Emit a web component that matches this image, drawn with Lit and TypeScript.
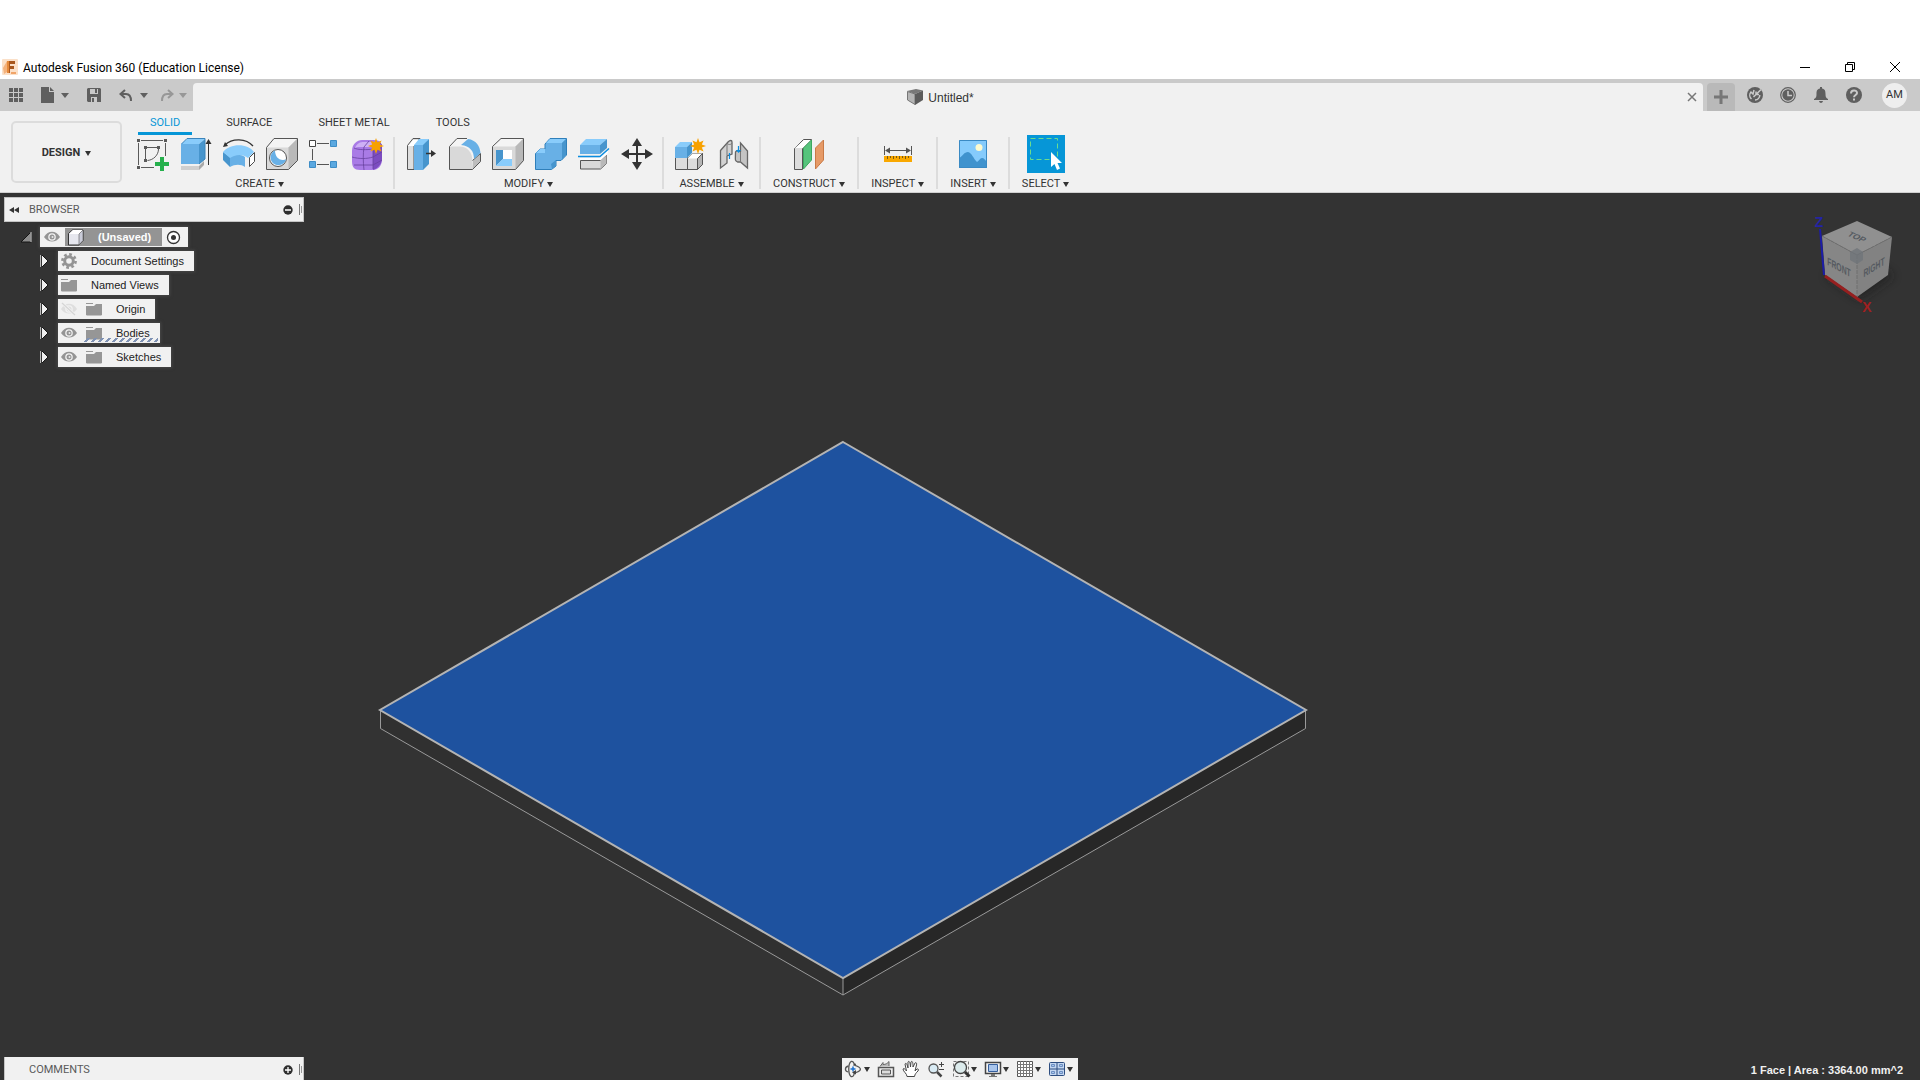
import { LitElement, html, css, svg } from "lit";
import { customElement } from "lit/decorators.js";

type Icon = { w: number; h: number; body: unknown };
const icon = (i: Icon) => html`<svg width=${i.w} height=${i.h} viewBox="0 0 ${i.w} ${i.h}" aria-hidden="true">${i.body}</svg>`;
const mk = (w: number, h: number, body: unknown): Icon => ({ w, h, body });

const star = svg`<path fill="#f7a100" d="M0-8 1.500-3.700 5.600-5.600 3.800-1.500 8 0 3.800 1.500 5.600 5.600 1.500 3.700 0 8-1.500 3.700-5.600 5.600-3.800 1.500-8 0-3.800-1.500-5.600-5.600-1.500-3.700Z"/>`;

const I = {
  logo: mk(16, 16, svg`<rect width="16" height="16" rx="1" fill="#fbe0c8"/><path d="M1 9 5 2v11l-3 2Z" fill="#f4b27c"/><path d="M5 2h8v3H8v2h4v3H8v4H5Z" fill="#a8561c"/><path d="M5 2h2v12H5Z" fill="#e58a3c"/><path d="M9 13h5v2H9Z" fill="#f0a468"/>`),
  grid: mk(14, 14, svg`<path fill="#5f5f5f" d="M0 0h4v4H0zM5 0h4v4H5zM10 0h4v4h-4zM0 5h4v4H0zM5 5h4v4H5zM10 5h4v4h-4zM0 10h4v4H0zM5 10h4v4H5zM10 10h4v4h-4z"/>`),
  file: mk(13, 16, svg`<path fill="#5f5f5f" d="M0 0h8v5h5v11H0zM9 0l4 4H9z"/>`),
  save: mk(14, 14, svg`<path fill="#5f5f5f" fill-rule="evenodd" d="M1 0h12l1 1v13H1l-1-1V1zM3 1v5h8V1zM4 9v5h6V9z"/><path d="M8 1h2v4H8zM5 10h2v4H5z" fill="#5f5f5f"/>`),
  undo: mk(14, 13, svg`<path d="M6 1 1.500 5 6 9M2 5h5c3 0 5 2 5 7" fill="none" stroke="#5f5f5f" stroke-width="2"/>`),
  redo: mk(14, 13, svg`<path d="M8 1l4.500 4L8 9M12 5H7c-3 0-5 2-5 7" fill="none" stroke="#979797" stroke-width="2"/>`),
  min: mk(10, 10, svg`<path d="M0 5.500h10" stroke="#000"/>`),
  restore: mk(10, 10, svg`<path d="M.5 2.500h7v7h-7zM2.500 2V.5h7v7H8" fill="none" stroke="#000"/>`),
  close: mk(10, 10, svg`<path d="M0 0l10 10M10 0 0 10" stroke="#000"/>`),
  tabClose: mk(10, 10, svg`<path d="M1 1l8 8M9 1 1 9" stroke="#777" stroke-width="1.500"/>`),
  plus: mk(14, 14, svg`<path d="M7 0v14M0 7h14" stroke="#777" stroke-width="3"/>`),
  cube: mk(16, 16, svg`<path d="M0 2 9 0l7 1.500L8 5z" fill="#777"/><path d="M.5 2.500 8 5v10.500L.5 11z" fill="#b5b5b5" stroke="#777"/><path d="M8 5l8-3.500V11l-8 5z" fill="#5b5b5b"/>`),
  sync: mk(16, 16, svg`<circle cx="8" cy="8" r="8" fill="#5f5f5f"/><path d="M4.500 12A5 5 0 0 1 4 5l2 2 1-4M12.800 8A5 5 0 0 1 8 13M6.500 10 9 7.500M9 4.500v3h3M9 7.500l5-5" fill="none" stroke="#cacaca" stroke-width="1.500"/>`),
  clock: mk(16, 16, svg`<circle cx="8" cy="8" r="7.300" fill="none" stroke="#5f5f5f" stroke-width="1.200"/><circle cx="8" cy="8" r="5.700" fill="#5f5f5f"/><path d="M8 4v4.500h4" fill="none" stroke="#cacaca" stroke-width="1.500"/>`),
  bell: mk(14, 16, svg`<path fill="#5f5f5f" d="M6 0h2v1.500c3 .5 3.500 2.500 3.500 5.500 0 3 .5 4 2.500 5v1H0v-1c2-1 2.500-2 2.500-5C2.500 4 3 2 6 1.500zM5 14h4c-.5 2.500-3.500 2.500-4 0z"/>`),
  help: mk(16, 16, svg`<circle cx="8" cy="8" r="8" fill="#5f5f5f"/><path d="M5 6.500C5 2.500 11 2.500 11 6c0 2-3 2-3 4.300M8 11.500v2" fill="none" stroke="#cacaca" stroke-width="2"/>`),
  sketch: mk(32, 32, svg`<g transform="translate(-1 0)"><path d="M5 2.500h22M29.500 5v13M2.500 5v22M5 29.500h13" fill="none" stroke="#5a5a5a" /><path d="M11 9.500h10M9.500 11v10M22.500 11c0 6-5 11-11 11.500" fill="none" stroke="#5a5a5a"/><path fill="#5a5a5a" d="M1 1h3v3H1zM28 1h3v3h-3zM1 28h3v3H1zM8 8h3v3H8zM21 8h3v3h-3zM8 21h3v3H8z"/><path d="M24 19h4v5h5v4h-5v5h-4v-5h-5v-4h5z" fill="#25b04c"/></g>`),
  extrude: mk(32, 32, svg`<path d="M1 28h18l5-5v4l-5 5H1z" fill="#a9a9a9"/><path d="M1 28h18v4H1z" fill="#cfcfcf"/><path d="M1 6h18v20H1z" fill="#68b0e6"/><path d="M1 6l6-5h18l-6 5z" fill="#89ccfb"/><path d="M19 6l6-5v20l-6 5z" fill="#4795cd"/><path d="M1.500 6 7 .5h18V21l-6 5" fill="none" stroke="#3a84bb"/><path d="M28.500 27V5" stroke="#333"/><path d="M28.500 1l3 5h-6z" fill="#333"/>`),
  revolve: mk(32, 32, svg`<path d="M2 7C9 0 23 0 30 8" fill="none" stroke="#333" stroke-width="1.300"/><path d="M0 9l2-5 3 4z" fill="#333"/><path d="M0 14l7 5v10l-7-7z" fill="#4795cd"/><path d="M7 19c5-3 11-3 15 0v10c-4-3-10-3-15 0z" fill="#68b0e6"/><path d="M0 14c7-9 25-9 31 0l-6 6c-5-4-12-4-18 0z" fill="#89ccfb"/><path d="M26.500 19.500l5-5v9l-5 5z" fill="#fff" stroke="#4a4a4a"/>`),
  hole: mk(32, 32, svg`<path d="M.5 9.500 8 .5h23.500v22l-9 9H.5z" fill="#d9d9d9"/><path d="M.5 9.500 8 .5h23.500l-9 9z" fill="#f4f4f4"/><path d="M22.500 9.500l9-9v22l-9 9z" fill="#b9b9b9"/><path d="M.5 9.500 8 .5h23.500v22l-9 9H.5z" fill="none" stroke="#555"/><circle cx="12" cy="20" r="8.500" fill="#fff" stroke="#555"/><path d="M9 12.500c-6 3-6 11 0 14 5 2 10-1 11-5-7 2-11-3-11-9z" fill="#68b0e6"/>`),
  pattern: mk(32, 32, svg`<path d="M8 5.500h12M3.500 11v11M8 26.500h12" stroke="#555"/><path d="M.5 2.500h6v6h-6z" fill="#fff" stroke="#444"/><path d="M21.500 2.500h6v6h-6zM.5 23.500h6v6h-6zM21.500 23.500h6v6h-6z" fill="#5ba8e0" stroke="#3e8dc6"/>`),
  form: mk(32, 32, svg`<path d="M0 13C0 6 5 2 10 2h12c7 0 8 4 8 9v10c0 7-4 11-9 11H8c-6 0-8-3-8-9z" fill="#a97be6"/><path d="M3 10c2-5 5-6 9-6h12c-2 4-4 5-8 5H8c-3 0-4 0-5 1z" fill="#cdb0f5"/><path d="M21 11l9-5v14c0 6-4 10-9 12z" fill="#7c4cc0"/><path d="M0 19c7 2 15 2 21 0l9-5M12 32c-1-9-1-16 0-23l5-6M21 31V11c3-1 6-3 8-6M2 10c4 2 13 2 19 1M2 27h19l9-5" fill="none" stroke="#6841a0" stroke-width=".8"/><g transform="translate(24 8)">${star}</g>`),
  press: mk(32, 32, svg`<path d="M1.500 7.500 7 .5h7l-6 7v24H1.500z" fill="#dedede" stroke="#555"/><path d="M2 8l5-6h7L8 8z" fill="#fff"/><path d="M8 7h9v25H8z" fill="#68b0e6"/><path d="M8 7l5-6h10l-5 6z" fill="#89ccfb"/><path d="M17 7l6-6v25l-6 6z" fill="#4795cd"/><path d="M20 15.500h7" stroke="#333" stroke-width="1.500"/><path d="M25 12l5 3.500-5 3.500z" fill="#333"/>`),
  fillet: mk(32, 32, svg`<path d="M.5 8.500 8 .5h11c7 1 12 7 12 14v9l-8 8H.5z" fill="#f4f4f4"/><path d="M.5 8.500h10c8 0 13 6 13 15v8H.5z" fill="#d9d9d9"/><path d="M24 22l7.500-6v8l-8 7.500z" fill="#bdbdbd"/><path d="M18 .5H8l-7.500 8v23h23l8-8v-8l-8 7" fill="none" stroke="#555"/><path d="M12 7l7-6c8 1 12 7 12.500 14L25 21c0-8-4-13-13-14z" fill="#68b0e6"/>`),
  shell: mk(32, 32, svg`<path d="M.5 8.500 9 .5h22.500v22l-8 9H.5z" fill="#d9d9d9"/><path d="M.5 8.500 9 .5h22.500l-8 8z" fill="#f4f4f4"/><path d="M23.500 8.500l8-8v22l-8 9z" fill="#b9b9b9"/><path d="M.5 8.500 9 .5h22.500v22l-8 9H.5z" fill="none" stroke="#555"/><path d="M4 12h16v16H4z" fill="#fff"/><path d="M4 12h7v9l-7 7z" fill="#4795cd"/><path d="M11 21h9v7H4z" fill="#89ccfb"/>`),
  combine: mk(32, 32, svg`<path d="M.5 15.500 5 11h5V6l5-5.500h16.500V17L26 22.500h-5V28l-4.500 3.500H.5z" fill="#68b0e6" stroke="#2f7fba"/><path d="M11 5l4-4h16l-4 4zM1 15l4-4h5v4z" fill="#89ccfb"/><path d="M27 5l4-4v16l-4 5zM16 26l5-4v6l-4 3z" fill="#4795cd"/>`),
  split: mk(32, 32, svg`<path d="M2 7h20v9H2z" fill="#68b0e6"/><path d="M2 7l6-6h21l-7 6z" fill="#89ccfb"/><path d="M22 7l7-6v9l-7 6z" fill="#4795cd"/><path d="M2.500 22.500h20l6-5v8l-6 5.500h-20z" fill="#d9d9d9" stroke="#555"/><path d="M22.500 22.500l6-5v8l-6 5z" fill="#b9b9b9"/><path d="M2 20h19l9-8v3l-7 7H2z" fill="#fff"/><path d="M0 18.500h22l9-8" fill="none" stroke="#0b8de0" stroke-width="1.500"/>`),
  move: mk(32, 32, svg`<path d="M16 5v22M5 16h22" stroke="#333" stroke-width="2"/><path fill="#333" d="M16 0l5 8H11zM16 32l5-8H11zM0 16l8-5v10zM32 16l-8-5v10z"/>`),
  component: mk(32, 32, svg`<path d="M.5 19.500h12v12H.5zM12.500 20.500l5-5h10v11l-5 5h-10z" fill="#dcdcdc" stroke="#555"/><path d="M12.500 20.500l5-5h10l-5 5z" fill="#fff"/><path d="M22.500 20.500l5-5v11l-5 5z" fill="#b5b5b5" stroke="#555"/><path d="M0 9h12v11H0z" fill="#68b0e6"/><path d="M0 9l5-5h12l-5 5z" fill="#89ccfb"/><path d="M12 9l5-5v11l-5 5z" fill="#4795cd"/><g transform="translate(23 8)">${star}</g>`),
  joint: mk(32, 32, svg`<path d="M2.500 12.500 10 4c2-2 4-2 4 0v12l-5 2v7l-6.500 5z" fill="#d2d2d2" stroke="#666" stroke-width="1.300"/><path d="M9 5v12M14 5c-1 2-4 2-5 0" fill="none" stroke="#777"/><path d="M22.500 5l7 8v17l-7-6h-3c-3-1-2-3-2-10 1-2 4-2 5 0z" fill="#c4c4c4" stroke="#666" stroke-width="1.300"/><path d="M22.500 14v10" stroke="#777"/><path d="M11.500 15v6M20.500 8v6" stroke="#0b8de0" stroke-width="1.200"/><path d="M18 12h5l-2.500 3z" fill="#0b8de0"/>`),
  construct: mk(32, 32, svg`<path d="M1.500 10.500l9-9h8l-9 9v21h-8z" fill="#dcdcdc" stroke="#555"/><path d="M2 10l9-8h7l-8 8z" fill="#fff"/><path d="M10.500 10l8-8v20l-8 9z" fill="#56c47c" stroke="#3ca860"/><path d="M22.500 10l8-8v20l-8 9z" fill="#e69a67" stroke="#c97a46"/>`),
  inspect: mk(32, 32, svg`<path d="M2.500 8v9M29.500 8v9M4 12.500h24" stroke="#555"/><path d="M3 12.500l5-3v6zM29 12.500l-5-3v6z" fill="#555"/><path d="M2 18h28v6H2z" fill="#f9a800"/><path d="M5.500 18v3M8.500 18v2M11.500 18v3M14.500 18v2M17.500 18v3M20.500 18v2M23.500 18v3M26.500 18v2" stroke="#7a5a10"/>`),
  insert: mk(32, 32, svg`<path d="M2 2h28v28H2z" fill="#85cbfc"/><circle cx="22" cy="9.500" r="3.500" fill="#fdfbd0"/><path d="M2 20c4-2 5-6 9-6 4 1 5 6 9 10 2-1 3-4 5-4s3 2 5 4v6H2z" fill="#4093ce"/><path d="M2.500 2.500h27v27h-27z" fill="none" stroke="#3a8ac4"/>`),
  select: mk(38, 38, svg`<path d="M0 0h38v38H0z" fill="#0696d7"/><path d="M3.500 3.500h27v21h-27z" fill="none" stroke="#6ddc8c" stroke-dasharray="5 3"/><path d="M24 17v15l3.500-3 2.500 6 3-1.500-2.500-5.500h4.500z" fill="#fff"/>`),
  rewind: mk(11, 8, svg`<path d="M5 1v6L0 4zM10 1v6L5 4z" fill="#333"/>`),
  minus: mk(10, 10, svg`<circle cx="5" cy="5" r="4.700" fill="#2e2e2e"/><path d="M2 5h6" stroke="#fff" stroke-width="1.500"/>`),
  add: mk(10, 10, svg`<circle cx="5" cy="5" r="4.700" fill="#2e2e2e"/><path d="M2 5h6M5 2v6" stroke="#fff" stroke-width="1.300"/>`),
  grip: mk(4, 11, svg`<path d="M.5 0v11" stroke="#777"/><path d="M2.500 2v7" stroke="#999"/>`),
  open: mk(12, 12, svg`<path d="M11 1v10H1z" fill="#8d8d8d" stroke="#151515"/><path d="M11 1v10" stroke="#ddd"/>`),
  shut: mk(10, 14, svg`<path d="M1.500 1v12" stroke="#bbb"/><path d="M3 1l6 6-6 6z" fill="#f0f0f0"/><path d="M3 1l6 6-6 6" fill="none" stroke="#181818"/>`),
  eye: mk(16, 12, svg`<path d="M0 6C4-1 12-1 16 6 12 12 4 12 0 6z" fill="#949494"/><circle cx="8" cy="6" r="3.800" fill="#f1f1f1"/><circle cx="8" cy="6" r="2.500" fill="#949494"/><circle cx="8.500" cy="6" r="1" fill="#e8e8e8"/>`),
  eyeOff: mk(16, 12, svg`<path d="M0 6C4-1 12-1 16 6 12 12 4 12 0 6z" fill="#dedede"/><circle cx="8" cy="6" r="3.800" fill="#f1f1f1"/><circle cx="8" cy="6" r="2.500" fill="#dedede"/><path d="M1 0l13 12" stroke="#f1f1f1" stroke-width="3"/><path d="M1 0l13 12" stroke="#d5d5d5" stroke-width="1.200"/>`),
  folder: mk(16, 14, svg`<path d="M0 1h7v1H0zM0 4h8l2-2h6v11H0z" fill="#969696"/><path d="M.5 13.500h15" stroke="#c2c2c2"/>`),
  gear: mk(16, 16, svg`<g fill="none" stroke="#949494"><circle cx="8" cy="8" r="4.300" stroke-width="3"/><circle cx="8" cy="8" r="6.600" stroke-width="2.600" stroke-dasharray="2.700 2.480"/></g>`),
  body: mk(17, 17, svg`<path d="M1.500 4.500l4-3.500h10.500v10.500l-4 4.500H1.500z" fill="#e6e7ee" stroke="#333"/><path d="M2 5l4-4h10l-4 4z" fill="#fff"/><path d="M12 5l4-4v10.500L12 16z" fill="#c9cbd8" stroke="#555" stroke-width=".6"/>`),
  radio: mk(13, 13, svg`<circle cx="6.500" cy="6.500" r="6" fill="#fff" stroke="#333" stroke-width="1.300"/><circle cx="6.500" cy="6.500" r="2.500" fill="#333"/>`),
  orbit: mk(18, 18, svg`<path d="M6 1.500C3 4 3 14 6 16.500c2 .5 3-1 3.500-4M6 1.500c2-.5 3 1 3.500 4" fill="none" stroke="#555" stroke-width="1.300"/><path d="M3.500 6C-.5 7-.5 11 3 12M10 5.500c7 2 7 5 1 7H8" fill="none" stroke="#555" stroke-width="1.300"/><path d="M5.500 9h5M8 6.500v5" stroke="#1a6fd0" stroke-width="1.500"/><path d="M11 10l-4 2.500 4 2zM8 5.500h3.500L10 3z" fill="#444"/>`),
  look: mk(18, 18, svg`<path d="M1.500 7.500h15v9h-15z" fill="#eee" stroke="#555" stroke-width="1.500"/><path d="M4.500 10h9v4h-9z" fill="#ddd" stroke="#555"/><path d="M3 6.500l3-4v2c3 0 4-1 6-3v4.500" fill="#bbb" stroke="#666"/>`),
  pan: mk(18, 18, svg`<path d="M5 16.500c0-3-4-5-4-7.500 1-1 2 0 3.500 2L3 4c1-1.500 2-.5 3 4L6 2c1-1.500 2-.5 2.500 5l.5-5c1-1.500 2-.5 2 5l2-4c1-1 2 0 1.500 2L13 11l2-2c1-.5 2 .5 1 2-2 2-3 3-3.500 5.500z" fill="#fff" stroke="#444"/>`),
  zoom: mk(18, 18, svg`<circle cx="6.500" cy="8.500" r="4.500" fill="#d9ebf4" stroke="#555" stroke-width="1.300"/><path d="M10 12l4.500 4.500" stroke="#444" stroke-width="2.500"/><path d="M12 4.500h5M14.500 2v5M12 9.500h5" stroke="#444"/>`),
  fit: mk(18, 18, svg`<path d="M1.500 1.500h15v15h-15z" fill="none" stroke="#777" stroke-dasharray="3 2"/><circle cx="8.500" cy="7.500" r="6" fill="#dcebec" stroke="#444" stroke-width="1.300"/><path d="M13 12l4.500 4.500" stroke="#333" stroke-width="3"/>`),
  display: mk(18, 18, svg`<path d="M1.500 2.500h15v11h-15z" fill="#f4f4f4" stroke="#444" stroke-width="1.500"/><path d="M4.500 4.500h9v7h-9z" fill="#a9c5ec" stroke="#355f9e"/><path d="M7 14v2H5v1h8v-1h-2v-2" fill="#777"/>`),
  mesh: mk(18, 18, svg`<path d="M1.500 1.500h15v15h-15z" fill="#fff" stroke="#555"/><path d="M4.500 1v16M7.500 1v16M10.500 1v16M13.500 1v16M1 4.500h16M1 7.500h16M1 10.500h16M1 13.500h16" stroke="#777"/>`),
  views: mk(18, 18, svg`<rect x="1.500" y="2.500" width="15" height="13" rx="1" fill="#c3d6f0" stroke="#2d4d80"/><path d="M9 3v12M2 9h14" stroke="#2d4d80"/><path d="M3.500 4.500h3v2h-3zM11.500 4.500h3v2h-3zM3.500 11.500h3v2h-3zM11.500 11.500h3v2h-3z" fill="#a9c5ec" stroke="#6c8fc2"/>`),
};

const caret = html`<i class="caret"></i>`;

const groups: { label: string; icons: [string, Icon][] }[] = [
  { label: "CREATE", icons: [["Create Sketch", I.sketch], ["Extrude", I.extrude], ["Revolve", I.revolve], ["Hole", I.hole], ["Pattern", I.pattern], ["Create Form", I.form]] },
  { label: "MODIFY", icons: [["Press Pull", I.press], ["Fillet", I.fillet], ["Shell", I.shell], ["Combine", I.combine], ["Split Body", I.split], ["Move", I.move]] },
  { label: "ASSEMBLE", icons: [["New Component", I.component], ["Joint", I.joint]] },
  { label: "CONSTRUCT", icons: [["Offset Plane", I.construct]] },
  { label: "INSPECT", icons: [["Measure", I.inspect]] },
  { label: "INSERT", icons: [["Insert Image", I.insert]] },
  { label: "SELECT", icons: [["Select", I.select]] },
];

const nodes: { label: string; icons: Icon[]; hatch?: boolean }[] = [
  { label: "Document Settings", icons: [I.gear] },
  { label: "Named Views", icons: [I.folder] },
  { label: "Origin", icons: [I.eyeOff, I.folder] },
  { label: "Bodies", icons: [I.eye, I.folder], hatch: true },
  { label: "Sketches", icons: [I.eye, I.folder] },
];

const navTools: [string, Icon, boolean][] = [
  ["Orbit", I.orbit, true], ["Look At", I.look, false], ["Pan", I.pan, false], ["Zoom", I.zoom, false],
  ["Fit", I.fit, true], ["Display Settings", I.display, true], ["Grid and Snaps", I.mesh, true], ["Viewports", I.views, true],
];

@customElement("app-root")
export class AppRoot extends LitElement {
  static styles = css`
    :host { display: flex; flex-direction: column; min-height: 100vh; background: #fff; color: #333;
      font: 12px/16px "Liberation Sans", Arial, sans-serif; }
    * { box-sizing: border-box; }
    svg { display: block; flex: none; overflow: visible; }
    button { display: flex; align-items: center; justify-content: center; gap: 5px; margin: 0; padding: 0; border: 0;
      background: none; color: inherit; font: inherit; white-space: nowrap; }
    .caret { border: 3px solid transparent; border-top: 5px solid #333; border-bottom: 0; }
    .narrow { font-family: Roboto, "Liberation Sans", sans-serif; font-size: 11px; }

    .title { display: flex; align-items: center; height: 79px; padding: 54px 0 0 2px; color: #000; }
    .title h1 { flex: 1; margin: 0 0 0 5px; padding-top: 2px; font: 12px/16px Roboto, "Noto Sans", sans-serif; }
    .title button { width: 45px; height: 24px; }
    .title .window { display: flex; padding-right: 3px; }

    .strip { display: flex; height: 32px; background: #cacaca; }
    .quick { display: flex; align-items: center; width: 193px; padding: 0 0 0 9px; gap: 18px; }
    .quick button { gap: 7px; }
    .quick .caret { border-width: 5px 4px 0; border-top-color: #5f5f5f; }
    .quick .dim { margin-left: -6px; gap: 5px; }
    .quick .dim .caret { border-top-color: #979797; }
    .doc { display: flex; flex: 1; align-items: center; margin-top: 4px; padding: 0 4px 0 3px; background: #f1f1f1;
      border-radius: 4px 4px 0 0; }
    .doc .name { display: flex; flex: 1; justify-content: center; align-items: center; gap: 5px; }
    .doc .name span { padding-top: 2px; }
    .doc button { width: 14px; height: 20px; }
    .new { width: 28px; margin: 4px 0 0 4px; background: #b9b9b9; border-radius: 4px 4px 0 0; }
    .account { display: flex; align-items: center; padding: 0 13px 0 3px; }
    .account button { width: 33px; height: 26px; }
    .account .avatar { width: 25px; height: 25px; margin-left: 12px; border-radius: 50%; background: #eee; }

    .ribbon { display: flex; height: 82px; padding-left: 11px; background: #f1f1f1; border-bottom: 1px solid #d0d0d0; }
    .design { width: 111px; height: 62px; margin: 10px 15px 0 0; padding-top: 2px; border: 2px solid #dcdcdc; border-radius: 5px; font-weight: bold; }
    .tabs { display: flex; gap: 22px; padding-left: 1px; }
    .tabs button { height: 24px; padding: 2px 12px 0; border-bottom: 3px solid transparent; }
    .tabs .on { color: #0696d7; border-color: #0696d7; }
    .groups { display: flex; padding-top: 2px; }
    .group { display: flex; flex-direction: column; height: 52px; padding: 0 9px 0 11px; }
    .group:first-child { padding-left: 0; }
    .group + .group { border-left: 2px solid #dcdcdc; }
    .group.single { padding: 0 12px; }
    .tools { display: flex; flex: none; gap: 11px; justify-content: center; align-items: center; height: 38px; margin-top: -2px; }
    .group .label { flex: none; height: 20px; gap: 3px; padding: 2px 2px 0 0; }
    .group.single .label { padding-right: 0; }

    .view { position: relative; display: flex; flex: 1; flex-direction: column; justify-content: space-between; background: #333; }
    .scene { position: absolute; inset: 0; width: 100%; height: 100%; }
    .navcube { position: absolute; top: 7px; right: 0; }
    .panel { display: flex; align-items: center; width: 300px; height: 25px; margin: 4px 0 0 4px; padding: 0 0 0 4px;
      background: #f1f1f1; border: 1px solid #c4c4c4; color: #5a5a5a; position: relative; }
    .panel h2 { flex: 1; margin: 0; font-size: 11px; font-weight: normal; }
    .panel .lead { width: 20px; justify-content: flex-start; }
    .panel .grip { margin-left: 6px; }
    .tree { position: relative; display: flex; flex-direction: column; gap: 4px; margin: 5px 0 0; padding: 0; list-style: none;
      font-size: 11px; color: #222; }
    .tree li { display: flex; align-items: center; gap: 9px; height: 20px; padding-left: 39px; }
    .tree .root { padding-left: 20px; gap: 8px; }
    .chip { position: relative; display: flex; align-items: center; gap: 9px; height: 20px; padding: 0 10px 0 3px; background: #f1f1f1;
      box-shadow: 0 0 3px 1px #484848; }
    .chip span { padding-left: 5px; }
    .hatch::after { content: ""; position: absolute; left: 25px; right: 2px; bottom: 1px; height: 4px;
      background: repeating-linear-gradient(135deg, transparent 0 3px, #7f92b4 3px 5px); }
    .root .chip { gap: 5px; padding: 0 8px 0 4px; }
    .root .sel { display: flex; align-items: center; gap: 14px; height: 18px; padding: 0 11px 0 2px; background: #949494; color: #fff;
      font-weight: bold; }
    .root .sel span { padding: 0; }

    .bottom { position: relative; display: grid; grid-template-columns: 1fr auto 1fr; align-items: end; height: 23px; }
    .bottom .panel { height: 23px; margin-top: 0; padding-top: 2px; border-width: 0 1px; }
    .nav { display: flex; align-items: center; height: 22px; padding: 0 5px 0 3px; gap: 7px; background: #f1f1f1; }
    .nav button { gap: 1px; height: 22px; }
    .status { justify-self: end; padding: 0 17px 2px 0; color: #f0f0f0; font-size: 11px; font-weight: bold; }
  `;

  render() {
    return html`
      <header class="title">
        ${icon(I.logo)}
        <h1>Autodesk Fusion 360 (Education License)</h1>
        <div class="window">
          <button aria-label="Minimize">${icon(I.min)}</button>
          <button aria-label="Restore">${icon(I.restore)}</button>
          <button aria-label="Close">${icon(I.close)}</button>
        </div>
      </header>
      <div class="strip">
        <div class="quick">
          <button aria-label="Data Panel">${icon(I.grid)}</button>
          <button aria-label="File">${icon(I.file)}${caret}</button>
          <button aria-label="Save">${icon(I.save)}</button>
          <button aria-label="Undo">${icon(I.undo)}${caret}</button>
          <button class="dim" aria-label="Redo">${icon(I.redo)}${caret}</button>
        </div>
        <div class="doc">
          <div class="name">${icon(I.cube)}<span>Untitled*</span></div>
          <button aria-label="Close document">${icon(I.tabClose)}</button>
        </div>
        <button class="new" aria-label="New design">${icon(I.plus)}</button>
        <div class="account">
          <button aria-label="Updates">${icon(I.sync)}</button>
          <button aria-label="Job Status">${icon(I.clock)}</button>
          <button aria-label="Notifications">${icon(I.bell)}</button>
          <button aria-label="Help">${icon(I.help)}</button>
          <button class="avatar narrow">AM</button>
        </div>
      </div>
      <div class="ribbon narrow">
        <button class="design">DESIGN ${caret}</button>
        <div>
          <nav class="tabs">
            <button class="on">SOLID</button><button>SURFACE</button><button>SHEET METAL</button><button>TOOLS</button>
          </nav>
          <div class="groups">
            ${groups.map((g) => html`<div class="group ${g.icons.length === 1 ? "single" : ""}">
              <div class="tools">${g.icons.map(([n, i]) => html`<button aria-label=${n}>${icon(i)}</button>`)}</div>
              <button class="label">${g.label}${caret}</button>
            </div>`)}
          </div>
        </div>
      </div>
      <main class="view">
        <svg class="scene" viewBox="0 193 1920 887" role="img" aria-label="Plate model">
          <path d="M380.500 710v19L843 995V978z" fill="#303030"/>
          <path d="M1305.500 710v19L843 995V978z" fill="#272727"/>
          <path d="M380.500 710v18.500L843 995l462.500-266.500V710M843 978v17" fill="none" stroke="#9a9a9a"/>
          <path d="M843 442l463 268-463 268L380 710z" fill="#1e529f" stroke="#b4b4b4" stroke-width="2"/>
        </svg>
        <svg class="navcube" width="140" height="120" viewBox="0 0 140 120" role="img" aria-label="View cube">
          <defs><filter id="soft" x="-50%" y="-50%" width="200%" height="200%"><feGaussianBlur stdDeviation="5"/></filter></defs>
          <path d="M46 76l34 24 34-24-34-24z" fill="#1c1c1c" opacity=".6" filter="url(#soft)"/>
          <path d="M42 36l35-15 35 16-35 18z" fill="#909090"/>
          <path d="M42 36l35 19v42L45 75z" fill="#868686"/>
          <path d="M112 37L77 55v42l31-22z" fill="#828282"/>
          <path d="M42 36l35 19 35-18M77 55v42" fill="none" stroke="#6f6f6f" stroke-dasharray="4 1"/>
          <path d="M70 52l7-4 6 4v8l-6 4-7-4z" fill="#6f7479" opacity=".8"/>
          <path d="M40 29l4 46" stroke="#1c1ca8" stroke-width="2"/>
          <path d="M45 76l37 26" stroke="#961f1f" stroke-width="3"/>
          <g font-family="Liberation Sans, sans-serif" fill="#555a60" font-size="10" font-weight="bold" text-anchor="middle">
            <text transform="matrix(.8 .35 -.6 .6 75 39)">TOP</text>
            <text transform="matrix(.68 .37 0 1.100 59 71)">FRONT</text>
            <text transform="matrix(.68 -.42 0 1.100 94 71)">RIGHT</text>
          </g>
          <g font-family="Liberation Sans, sans-serif" font-size="14" text-anchor="middle" font-weight="bold">
            <text x="39" y="27" fill="#2424a4">Z</text><text x="87" y="112" fill="#a02020">X</text>
          </g>
        </svg>
        <aside>
          <div class="panel narrow">
            <button class="lead" aria-label="Collapse browser">${icon(I.rewind)}</button><h2>BROWSER</h2>
            <button aria-label="Minimize browser">${icon(I.minus)}</button><span class="grip">${icon(I.grip)}</span>
          </div>
          <ul class="tree">
            <li class="root">${icon(I.open)}
              <div class="chip">${icon(I.eye)}<div class="sel">${icon(I.body)}<span>(Unsaved)</span></div>${icon(I.radio)}</div>
            </li>
            ${nodes.map((n) => html`<li>${icon(I.shut)}
              <div class="chip ${n.hatch ? "hatch" : ""}">${n.icons.map(icon)}<span>${n.label}</span></div>
            </li>`)}
          </ul>
        </aside>
        <footer class="bottom">
          <div class="panel narrow">
            <span class="lead"></span><h2>COMMENTS</h2>
            <button aria-label="Add comment">${icon(I.add)}</button><span class="grip">${icon(I.grip)}</span>
          </div>
          <div class="nav">
            ${navTools.map(([n, i, c]) => html`<button aria-label=${n}>${icon(i)}${c ? caret : ""}</button>`)}
          </div>
          <div class="status">1 Face | Area : 3364.00 mm^2</div>
        </footer>
      </main>
    `;
  }
}
